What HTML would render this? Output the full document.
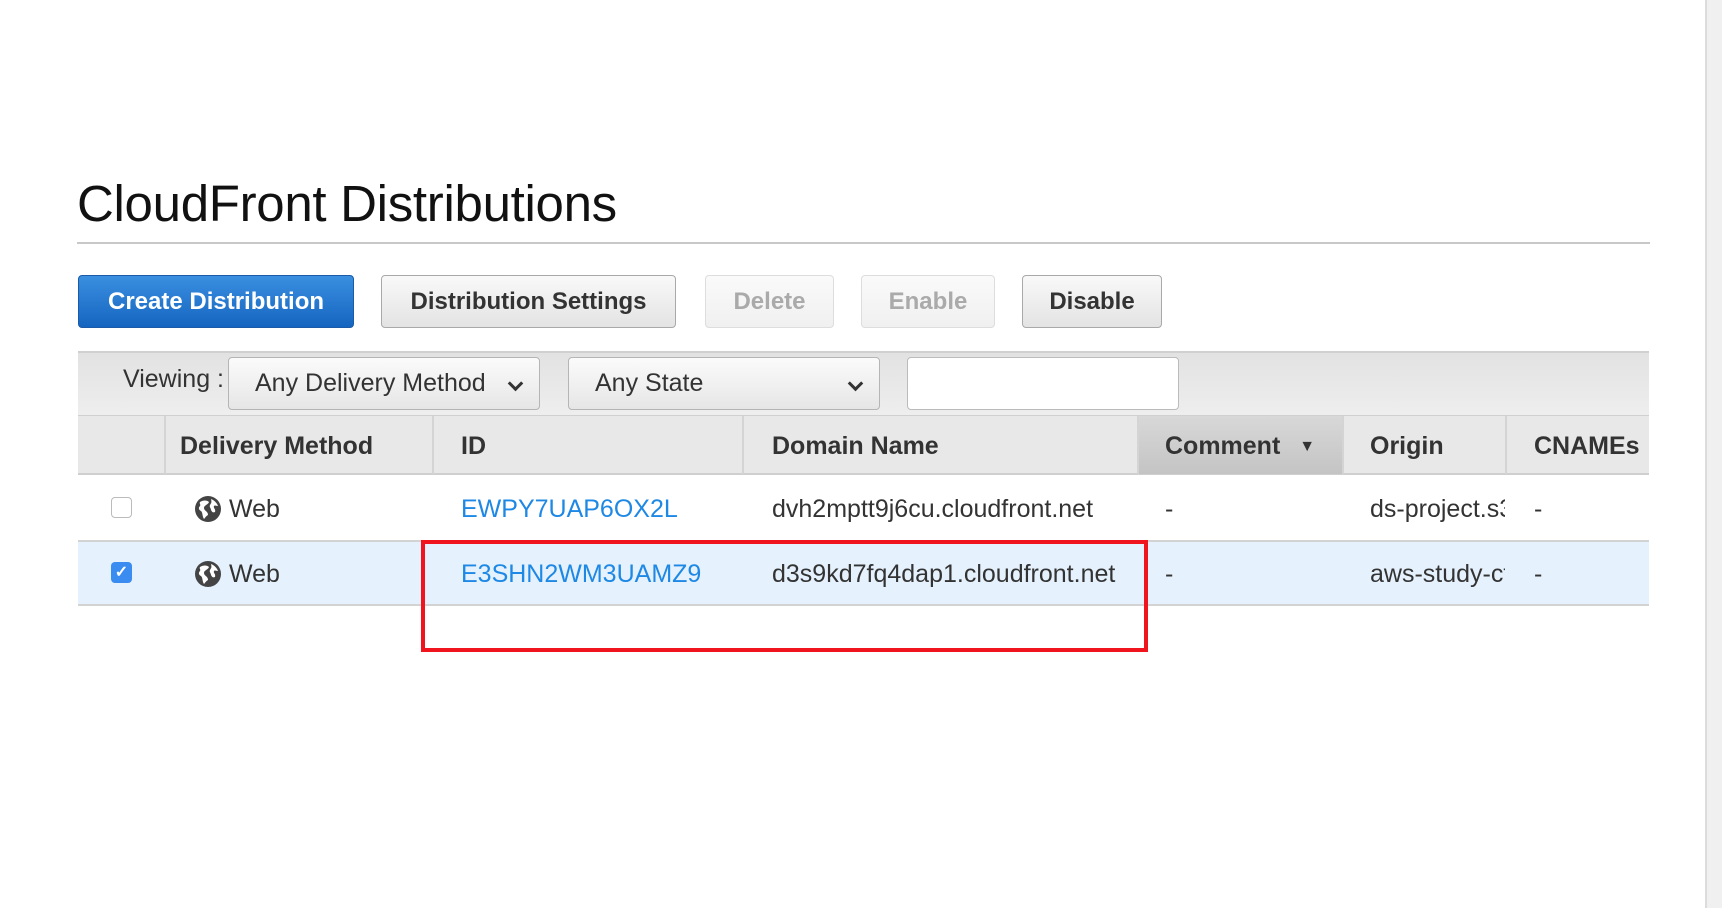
<!DOCTYPE html>
<html><head><meta charset="utf-8"><style>
*{box-sizing:border-box;margin:0;padding:0}
body{width:1722px;height:908px;background:#fff;font-family:"Liberation Sans",Arial,sans-serif;position:relative;overflow:hidden;color:#333}
.a{position:absolute}
h1{position:absolute;left:77px;top:174px;font-size:51px;font-weight:normal;color:#111;letter-spacing:-0.3px}
.hr{left:77px;top:242px;width:1573px;height:2px;background:#c8c8c8}
.btn{position:absolute;top:275px;height:53px;border:1px solid #a9a9a9;border-radius:4px;background:linear-gradient(#f9f9f9,#e3e3e3);font-weight:bold;font-size:24px;color:#333;text-align:center;line-height:51px}
.dis{color:#aaa;border-color:#ddd;background:linear-gradient(#fafafa,#f0f0f0)}
.bar{left:78px;top:351px;width:1571px;height:64px;background:linear-gradient(#e2e2e2,#eeeeee);border-top:2px solid #d0d0d0}
.sel{position:absolute;top:357px;height:53px;border:1px solid #b5b5b5;border-radius:4px;background:linear-gradient(#fbfbfb,#e6e6e6);font-size:25px;line-height:51px;padding-left:26px;color:#333}
.chev{position:absolute;top:20px;width:11px;height:11px;border-right:3px solid #333;border-bottom:3px solid #333;transform:rotate(45deg)}
.hdr{left:78px;top:415px;width:1571px;height:60px;background:#e8e8e8;border-bottom:2px solid #cfcfcf;border-top:1px solid #d0d0d0}
.th{position:absolute;top:416px;height:58px;line-height:60px;font-weight:bold;font-size:25px;color:#333}
.vl{position:absolute;top:416px;width:2px;height:58px;background:#d4d4d4}
.td{position:absolute;font-size:25px;color:#333}
.lk{color:#1e88e5}
</style></head><body>
<h1>CloudFront Distributions</h1>
<div class="a hr"></div>
<div class="btn" style="left:78px;width:276px;background:linear-gradient(#3a8fe0,#1565c0);border-color:#1a5aa8;color:#fff">Create Distribution</div>
<div class="btn" style="left:381px;width:295px">Distribution Settings</div>
<div class="btn dis" style="left:705px;width:129px">Delete</div>
<div class="btn dis" style="left:861px;width:134px">Enable</div>
<div class="btn" style="left:1022px;width:140px">Disable</div>
<div class="a bar"></div>
<div class="td" style="left:123px;top:365px">Viewing :</div>
<div class="sel" style="left:228px;width:312px">Any Delivery Method<div class="chev" style="left:281px"></div></div>
<div class="sel" style="left:568px;width:312px">Any State<div class="chev" style="left:281px"></div></div>
<div class="a" style="left:907px;top:357px;width:272px;height:53px;background:#fff;border:1px solid #bbb;border-radius:4px"></div>
<div class="a hdr"></div>
<div class="a" style="left:1138px;top:416px;width:204px;height:58px;background:linear-gradient(#d8d8d8,#c4c4c4)"></div>
<div class="vl" style="left:164px"></div><div class="vl" style="left:432px"></div><div class="vl" style="left:742px"></div><div class="vl" style="left:1137px"></div><div class="vl" style="left:1342px"></div><div class="vl" style="left:1505px"></div>
<div class="th" style="left:180px">Delivery Method</div>
<div class="th" style="left:461px">ID</div>
<div class="th" style="left:772px">Domain Name</div>
<div class="th" style="left:1165px">Comment <span style="font-size:16px;margin-left:12px;position:relative;top:-3px">▼</span></div>
<div class="th" style="left:1370px">Origin</div>
<div class="th" style="left:1534px">CNAMEs</div>
<div class="a" style="left:78px;top:540px;width:1571px;height:66px;background:#e5f1fc;border-top:2px solid #d3d3d3;border-bottom:2px solid #d3d3d3"></div>
<div class="a" style="left:111px;top:497px;width:21px;height:21px;border:1px solid #bbb;border-radius:4px;background:#fff"></div>
<div class="a" style="left:111px;top:562px;width:21px;height:21px;border-radius:4px;background:#3b8cf0;color:#fff;font-size:16px;text-align:center;line-height:21px;font-weight:bold">✓</div>
<svg class="a" style="left:194px;top:495px" width="28" height="28" viewBox="0 0 28 28"><circle cx="14" cy="14" r="13" fill="#444"/><path d="M6 7c3-2 7-2 9 0-1 3-5 3-5 6 0 3 4 3 4 7-2 1-3 3-4 4-2-3-1-6-3-8-2-1-3-3-1-5 1-2-1-2 0-4zM17 4c3 1 6 4 7 7-2 0-3-1-4 0-1 2 2 3 1 6-2 1-3 0-4-2 0-2-2-3-1-5 1-2 2-2 1-6z" fill="#fff"/></svg>
<svg class="a" style="left:194px;top:560px" width="28" height="28" viewBox="0 0 28 28"><circle cx="14" cy="14" r="13" fill="#444"/><path d="M6 7c3-2 7-2 9 0-1 3-5 3-5 6 0 3 4 3 4 7-2 1-3 3-4 4-2-3-1-6-3-8-2-1-3-3-1-5 1-2-1-2 0-4zM17 4c3 1 6 4 7 7-2 0-3-1-4 0-1 2 2 3 1 6-2 1-3 0-4-2 0-2-2-3-1-5 1-2 2-2 1-6z" fill="#fff"/></svg>
<div class="td" style="left:229px;top:495px">Web</div>
<div class="td lk" style="left:461px;top:495px">EWPY7UAP6OX2L</div>
<div class="td" style="left:772px;top:495px">dvh2mptt9j6cu.cloudfront.net</div>
<div class="td" style="left:1165px;top:495px">-</div>
<div class="td" style="left:1370px;top:495px;width:135px;overflow:hidden;white-space:nowrap">ds-project.s3</div>
<div class="td" style="left:1534px;top:495px">-</div>
<div class="td" style="left:229px;top:560px">Web</div>
<div class="td lk" style="left:461px;top:560px">E3SHN2WM3UAMZ9</div>
<div class="td" style="left:772px;top:560px">d3s9kd7fq4dap1.cloudfront.net</div>
<div class="td" style="left:1165px;top:560px">-</div>
<div class="td" style="left:1370px;top:560px;width:135px;overflow:hidden;white-space:nowrap">aws-study-cf</div>
<div class="td" style="left:1534px;top:560px">-</div>
<div class="a" style="left:421px;top:540px;width:727px;height:112px;border:4px solid #f0141e"></div>
<div class="a" style="left:1705px;top:0;width:17px;height:908px;background:#f0f0f0;border-left:2px solid #dcdcdc"></div>
</body></html>
